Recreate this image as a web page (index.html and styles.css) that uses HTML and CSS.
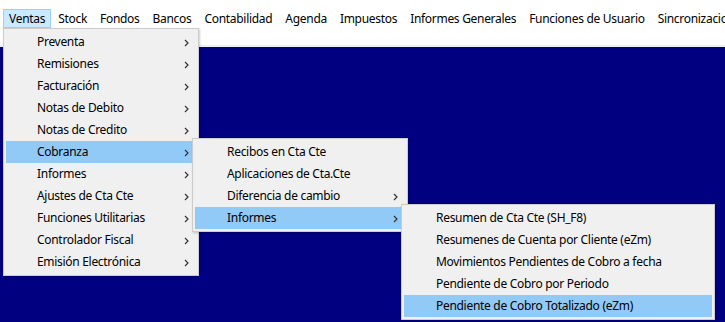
FILE: index.html
```html
<!DOCTYPE html>
<html lang="es">

<head>
    <meta charset="utf-8">
    <title>Ventas</title>
    <link rel="stylesheet" href="styles.css">
</head>

<body>
    <header class="barra">
        <nav class="menubar">
            <span class="top-item activo">Ventas</span>
            <span class="top-item">Stock</span>
            <span class="top-item">Fondos</span>
            <span class="top-item">Bancos</span>
            <span class="top-item">Contabilidad</span>
            <span class="top-item">Agenda</span>
            <span class="top-item">Impuestos</span>
            <span class="top-item">Informes Generales</span>
            <span class="top-item">Funciones de Usuario</span>
            <span class="top-item">Sincronizacion</span>
        </nav>
    </header>

    <main class="escritorio">
        <ul class="menu nivel1">
            <li class="item">Preventa<svg class="flecha" viewBox="0 0 5 8"><polyline points="1,1 4,4 1,7"/></svg></li>
            <li class="item">Remisiones<svg class="flecha" viewBox="0 0 5 8"><polyline points="1,1 4,4 1,7"/></svg></li>
            <li class="item">Facturación<svg class="flecha" viewBox="0 0 5 8"><polyline points="1,1 4,4 1,7"/></svg></li>
            <li class="item">Notas de Debito<svg class="flecha" viewBox="0 0 5 8"><polyline points="1,1 4,4 1,7"/></svg></li>
            <li class="item">Notas de Credito<svg class="flecha" viewBox="0 0 5 8"><polyline points="1,1 4,4 1,7"/></svg></li>
            <li class="item sel">Cobranza<svg class="flecha" viewBox="0 0 5 8"><polyline points="1,1 4,4 1,7"/></svg></li>
            <li class="item">Informes<svg class="flecha" viewBox="0 0 5 8"><polyline points="1,1 4,4 1,7"/></svg></li>
            <li class="item">Ajustes de Cta Cte<svg class="flecha" viewBox="0 0 5 8"><polyline points="1,1 4,4 1,7"/></svg></li>
            <li class="item">Funciones Utilitarias<svg class="flecha" viewBox="0 0 5 8"><polyline points="1,1 4,4 1,7"/></svg></li>
            <li class="item">Controlador Fiscal<svg class="flecha" viewBox="0 0 5 8"><polyline points="1,1 4,4 1,7"/></svg></li>
            <li class="item">Emisión Electrónica<svg class="flecha" viewBox="0 0 5 8"><polyline points="1,1 4,4 1,7"/></svg></li>
        </ul>

        <ul class="menu nivel2">
            <li class="item">Recibos en Cta Cte</li>
            <li class="item">Aplicaciones de Cta.Cte</li>
            <li class="item">Diferencia de cambio<svg class="flecha" viewBox="0 0 5 8"><polyline points="1,1 4,4 1,7"/></svg></li>
            <li class="item sel">Informes<svg class="flecha" viewBox="0 0 5 8"><polyline points="1,1 4,4 1,7"/></svg></li>
        </ul>

        <ul class="menu nivel3">
            <li class="item">Resumen de Cta Cte (SH_F8)</li>
            <li class="item">Resumenes de Cuenta por Cliente (eZm)</li>
            <li class="item">Movimientos Pendientes de Cobro a fecha</li>
            <li class="item">Pendiente de Cobro por Periodo</li>
            <li class="item sel">Pendiente de Cobro Totalizado (eZm)</li>
        </ul>
    </main>
</body>

</html>
```

FILE: styles.css
```css
body {
    margin: 0;
    background: #000080;
    font-family: 'Noto Sans', 'Open Sans', sans-serif;
    font-size: 12px;
    letter-spacing: -0.3px;
    color: #000;
    overflow: hidden;
}

.barra {
    background: #fff;
    height: 45px;
    border-bottom: 2px solid #f0f0f0;
    overflow: hidden;
}

.menubar {
    display: flex;
    padding: 9px 0 0 3px;
    white-space: nowrap;
}

.top-item {
    height: 17px;
    line-height: 17px;
    padding: 0 5px;
    margin-right: 1px;
    border: 1px solid transparent;
}

.top-item.activo {
    background: #cce8ff;
    border-color: #99d1ff;
}

.escritorio {
    position: relative;
    height: 275px;
}

/* menues desplegables */
.menu {
    position: absolute;
    margin: 0;
    padding: 2px;
    list-style: none;
    background: #f0f0f0;
    border: 1px solid #ccc;
    box-shadow: 1px 1px 2px rgba(0, 0, 0, 0.2);
}

.nivel1 {
    left: 3px;
    top: -19px;
    width: 190px;
}

.nivel2 {
    left: 192px;
    top: 91px;
    width: 210px;
}

.nivel3 {
    left: 401px;
    top: 157px;
    width: 308px;
}

.item {
    position: relative;
    height: 22px;
    line-height: 22px;
    padding-left: 32px;
    white-space: nowrap;
}

.nivel1 .item {
    padding-left: 31px;
}

.item.sel {
    background: #91c9f7;
}

.flecha {
    position: absolute;
    right: 7px;
    top: 8px;
    width: 5px;
    height: 8px;
    fill: none;
    stroke: #333;
    stroke-width: 1.2;
}
```
